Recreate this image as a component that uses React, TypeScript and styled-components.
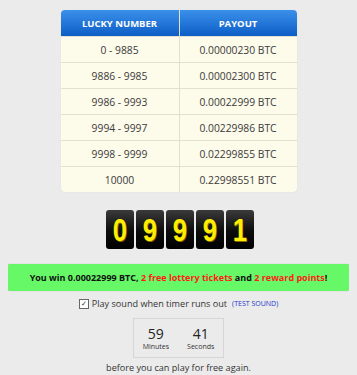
import React from "react";
import styled, { createGlobalStyle } from "styled-components";

const Global = createGlobalStyle`
  html, body { margin: 0; padding: 0; }
  body {
    margin: 8px;
    background: #ebebeb;
    font-family: "Open Sans", "Liberation Sans", sans-serif;
    color: #333;
  }
`;

const Page = styled.div`
  display: flex;
  flex-direction: column;
  align-items: center;
  padding-top: 2px;
`;

const Table = styled.div`
  width: 236px;
  border-radius: 4px;
  overflow: hidden;
  background: #fdfbea;
  box-shadow: 0 0 1px rgba(0,0,0,0.15);
`;

const Row = styled.div<{ $head?: boolean }>`
  display: grid;
  grid-template-columns: 118px 118px;
  height: 26px;
  box-sizing: border-box;
  ${(p) =>
    p.$head
      ? `background: linear-gradient(#3b90ea, #0d5ec6); color: #fff; font-weight: 700;`
      : `border-top: 1px solid #e2e0d2;`}
`;

const Cell = styled.div<{ $head?: boolean }>`
  display: flex;
  align-items: center;
  justify-content: center;
  font-size: ${(p) => (p.$head ? "9.5px" : "10.3px")};
  color: ${(p) => (p.$head ? "#fff" : "#3a3a3a")};
  & + & {
    border-left: 1px solid ${(p) => (p.$head ? "#6aa6e6" : "#e2e0d2")};
  }
`;

const Digits = styled.div`
  display: flex;
  gap: 2px;
  margin-top: 18px;
  margin-left: 3px;
`;

const Digit = styled.div`
  width: 28px;
  height: 39px;
  border-radius: 3px;
  background: linear-gradient(#3a3a3a, #0c0c0c 55%, #000);
  display: flex;
  align-items: center;
  justify-content: center;
`;

const Glyph = styled.span`
  color: #ffee00;
  font-family: "Liberation Sans", Arial, sans-serif;
  font-weight: 700;
  font-size: 32px;
  line-height: 1;
  transform: scaleX(0.8);
  text-shadow: 1px 1px 0 #8a6a00;
`;

const WinBar = styled.div`
  align-self: stretch;
  margin-top: 15px;
  height: 27px;
  border-radius: 2px;
  background: #66f866;
  box-shadow: 0 0 1px rgba(0,0,0,0.3);
  display: flex;
  align-items: center;
  justify-content: center;
  font-weight: 700;
  font-size: 9px;
  color: #111;
  white-space: nowrap;
`;

const Red = styled.span`
  color: #ff1a1a;
`;

const SoundLine = styled.div`
  margin-top: 6px;
  font-size: 9.1px;
  color: #333;
  display: flex;
  align-items: center;
  gap: 3px;
`;

const Check = styled.span`
  width: 8px;
  height: 8px;
  border: 1px solid #666;
  background: #fff;
  display: inline-flex;
  align-items: center;
  justify-content: center;
  font-size: 7px;
  line-height: 1;
  color: #333;
`;

const TestSound = styled.span`
  font-size: 7px;
  color: #2233cc;
  margin-left: 2px;
`;

const TimerBox = styled.div`
  margin-top: 8px;
  width: 89px;
  height: 38px;
  border: 1px solid #d6d6d6;
  display: flex;
  justify-content: center;
  gap: 18px;
  align-items: center;
`;

const Unit = styled.div`
  display: flex;
  flex-direction: column;
  align-items: center;
`;

const Num = styled.div`
  font-size: 14px;
  line-height: 17px;
  color: #222;
`;

const Label = styled.div`
  font-size: 7px;
  line-height: 9px;
  color: #333;
`;

const Footer = styled.div`
  margin-top: 3px;
  font-size: 9.1px;
  color: #333;
`;

const rows: [string, string][] = [
  ["0 - 9885", "0.00000230 BTC"],
  ["9886 - 9985", "0.00002300 BTC"],
  ["9986 - 9993", "0.00022999 BTC"],
  ["9994 - 9997", "0.00229986 BTC"],
  ["9998 - 9999", "0.02299855 BTC"],
  ["10000", "0.22998551 BTC"],
];

export default function App() {
  return (
    <>
      <Global />
      <Page>
        <Table>
          <Row $head>
            <Cell $head>LUCKY NUMBER</Cell>
            <Cell $head>PAYOUT</Cell>
          </Row>
          {rows.map(([a, b]) => (
            <Row key={a}>
              <Cell>{a}</Cell>
              <Cell>{b}</Cell>
            </Row>
          ))}
        </Table>
        <Digits>
          {"09991".split("").map((d, i) => (
            <Digit key={i}>
              <Glyph>{d}</Glyph>
            </Digit>
          ))}
        </Digits>
        <WinBar>
          <span>
            You win 0.00022999 BTC, <Red>2 free lottery tickets</Red> and{" "}
            <Red>2 reward points</Red>!
          </span>
        </WinBar>
        <SoundLine>
          <Check>✓</Check>
          Play sound when timer runs out
          <TestSound>(TEST SOUND)</TestSound>
        </SoundLine>
        <TimerBox>
          <Unit>
            <Num>59</Num>
            <Label>Minutes</Label>
          </Unit>
          <Unit>
            <Num>41</Num>
            <Label>Seconds</Label>
          </Unit>
        </TimerBox>
        <Footer>before you can play for free again.</Footer>
      </Page>
    </>
  );
}
